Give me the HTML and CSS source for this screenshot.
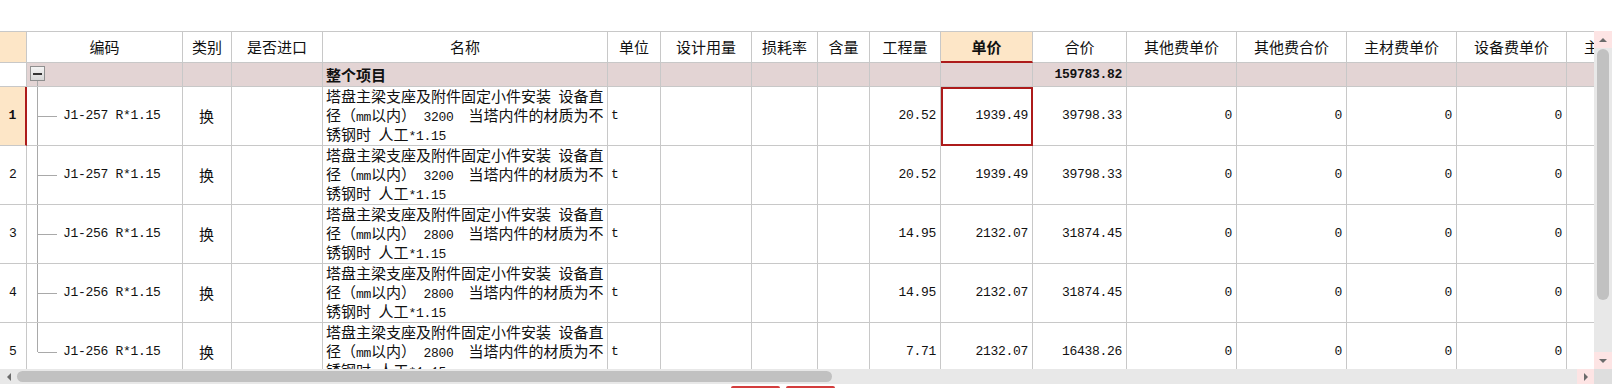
FILE: index.html
```html
<!DOCTYPE html>
<html lang="zh-CN">
<head>
  <meta charset="UTF-8">
  <title>分部分项</title>
  <link rel="stylesheet" href="styles.css">
</head>
<body>
  <div class="grid">
    <div class="grid-body">
      <div class="viewport">
        <table class="sheet">
          <colgroup>
            <col style="width:27px"><col style="width:156px"><col style="width:49px"><col style="width:91px">
            <col style="width:285px"><col style="width:53px"><col style="width:91px"><col style="width:66px">
            <col style="width:52px"><col style="width:71px"><col style="width:92px"><col style="width:94px">
            <col style="width:110px"><col style="width:110px"><col style="width:110px"><col style="width:110px">
            <col style="width:110px">
          </colgroup>
          <tr class="head">
            <th class="rn corner"></th>
            <th>编码</th>
            <th>类别</th>
            <th>是否进口</th>
            <th>名称</th>
            <th>单位</th>
            <th>设计用量</th>
            <th>损耗率</th>
            <th>含量</th>
            <th>工程量</th>
            <th class="sorted">单价</th>
            <th>合价</th>
            <th>其他费单价</th>
            <th>其他费合价</th>
            <th>主材费单价</th>
            <th>设备费单价</th>
            <th>主材费合价</th>
          </tr>
          <tr class="group">
            <td class="rn"></td>
            <td class="code root"><span class="toggle"></span></td>
            <td></td>
            <td></td>
            <td class="title">整个项目</td>
            <td></td>
            <td></td>
            <td></td>
            <td></td>
            <td></td>
            <td></td>
            <td class="num">159783.82</td>
            <td></td>
            <td></td>
            <td></td>
            <td></td>
            <td></td>
          </tr>
          <tr class="item">
            <td class="rn current">1</td>
            <td class="code">J1-257 R*1.15</td>
            <td class="mid">换</td>
            <td></td>
            <td class="name">塔盘主梁支座及附件固定小件安装<span class="m"> </span>设备直<br>径（<span class="m">mm</span>以内）<span class="m"> 3200  </span>当塔内件的材质为不<br>锈钢时<span class="m"> </span>人工<span class="m">*1.15</span></td>
            <td class="unit">t</td>
            <td></td>
            <td></td>
            <td></td>
            <td class="num">20.52</td>
            <td class="num active">1939.49</td>
            <td class="num">39798.33</td>
            <td class="num">0</td>
            <td class="num">0</td>
            <td class="num">0</td>
            <td class="num">0</td>
            <td></td>
          </tr>
          <tr class="item">
            <td class="rn">2</td>
            <td class="code">J1-257 R*1.15</td>
            <td class="mid">换</td>
            <td></td>
            <td class="name">塔盘主梁支座及附件固定小件安装<span class="m"> </span>设备直<br>径（<span class="m">mm</span>以内）<span class="m"> 3200  </span>当塔内件的材质为不<br>锈钢时<span class="m"> </span>人工<span class="m">*1.15</span></td>
            <td class="unit">t</td>
            <td></td>
            <td></td>
            <td></td>
            <td class="num">20.52</td>
            <td class="num">1939.49</td>
            <td class="num">39798.33</td>
            <td class="num">0</td>
            <td class="num">0</td>
            <td class="num">0</td>
            <td class="num">0</td>
            <td></td>
          </tr>
          <tr class="item">
            <td class="rn">3</td>
            <td class="code">J1-256 R*1.15</td>
            <td class="mid">换</td>
            <td></td>
            <td class="name">塔盘主梁支座及附件固定小件安装<span class="m"> </span>设备直<br>径（<span class="m">mm</span>以内）<span class="m"> 2800  </span>当塔内件的材质为不<br>锈钢时<span class="m"> </span>人工<span class="m">*1.15</span></td>
            <td class="unit">t</td>
            <td></td>
            <td></td>
            <td></td>
            <td class="num">14.95</td>
            <td class="num">2132.07</td>
            <td class="num">31874.45</td>
            <td class="num">0</td>
            <td class="num">0</td>
            <td class="num">0</td>
            <td class="num">0</td>
            <td></td>
          </tr>
          <tr class="item">
            <td class="rn">4</td>
            <td class="code">J1-256 R*1.15</td>
            <td class="mid">换</td>
            <td></td>
            <td class="name">塔盘主梁支座及附件固定小件安装<span class="m"> </span>设备直<br>径（<span class="m">mm</span>以内）<span class="m"> 2800  </span>当塔内件的材质为不<br>锈钢时<span class="m"> </span>人工<span class="m">*1.15</span></td>
            <td class="unit">t</td>
            <td></td>
            <td></td>
            <td></td>
            <td class="num">14.95</td>
            <td class="num">2132.07</td>
            <td class="num">31874.45</td>
            <td class="num">0</td>
            <td class="num">0</td>
            <td class="num">0</td>
            <td class="num">0</td>
            <td></td>
          </tr>
          <tr class="item">
            <td class="rn">5</td>
            <td class="code last">J1-256 R*1.15</td>
            <td class="mid">换</td>
            <td></td>
            <td class="name">塔盘主梁支座及附件固定小件安装<span class="m"> </span>设备直<br>径（<span class="m">mm</span>以内）<span class="m"> 2800  </span>当塔内件的材质为不<br>锈钢时<span class="m"> </span>人工<span class="m">*1.15</span></td>
            <td class="unit">t</td>
            <td></td>
            <td></td>
            <td></td>
            <td class="num">7.71</td>
            <td class="num">2132.07</td>
            <td class="num">16438.26</td>
            <td class="num">0</td>
            <td class="num">0</td>
            <td class="num">0</td>
            <td class="num">0</td>
            <td></td>
          </tr>
        </table>
      </div>
      <div class="vscroll">
        <div class="sb-btn hot"><span class="tri up"></span></div>
        <div class="vtrack"><div class="vthumb"></div></div>
        <div class="sb-btn hot"><span class="tri down"></span></div>
      </div>
    </div>
    <div class="hscroll">
      <div class="hbar">
        <div class="sb-btn"><span class="tri left"></span></div>
        <div class="hthumb"></div>
        <div class="htrack"></div>
        <div class="sb-btn hot"><span class="tri right"></span></div>
      </div>
      <div class="corner-box"></div>
    </div>
  </div>
  <div class="actions">
    <div class="act"></div>
    <div class="act"></div>
  </div>
</body>
</html>
```

FILE: styles.css
```css
body {
  margin: 0;
  background: #fff;
  color: #111;
  font-family: "Noto Sans CJK SC", sans-serif;
  font-size: 15px;
}
.grid {
  margin-top: 31px;
  width: 1612px;
}
.grid-body {
  display: flex;
  height: 338px;
}
.viewport {
  width: 1594px;
  overflow: hidden;
}
.sheet {
  width: 1677px;
  table-layout: fixed;
  border-collapse: separate;
  border-spacing: 0;
  border-top: 1px solid #c8c8c8;
}
.sheet th,
.sheet td {
  border-right: 1px solid #c8c8c8;
  border-bottom: 1px solid #c8c8c8;
  padding: 0 4px 0 3px;
  line-height: 16px;
  white-space: nowrap;
  overflow: hidden;
  font-weight: normal;
}
.head {
  height: 31px;
}
.head th {
  text-align: center;
  padding: 0;
}
.head th.sorted {
  background: #fde6c7;
  font-weight: bold;
  border-bottom: 2px solid #ad1b1b;
}
.corner {
  background: #fde6c7;
}
.group {
  height: 24px;
}
.group td {
  background: #e3d4d4;
}
.group td.rn {
  background: #fff;
}
.group .title {
  font-weight: bold;
}
.group .num {
  font-weight: bold;
}
.item {
  height: 59px;
}
.rn {
  text-align: center;
  padding: 0 !important;
  font-family: "Liberation Mono", monospace;
  font-size: 13px;
}
.rn.current {
  background: #fde6c7;
  font-weight: bold;
  border-right: 2px solid #ad1b1b;
}
.code {
  padding-left: 36px !important;
  font-family: "Liberation Mono", monospace;
  font-size: 13px;
  letter-spacing: -0.3px;
  background:
    linear-gradient(#a9a9a9, #a9a9a9) 10px 0 / 1px 100% no-repeat,
    linear-gradient(#a9a9a9, #a9a9a9) 11px 50% / 19px 1px no-repeat;
}
.code.last {
  background:
    linear-gradient(#a9a9a9, #a9a9a9) 10px 0 / 1px 50% no-repeat,
    linear-gradient(#a9a9a9, #a9a9a9) 11px 50% / 19px 1px no-repeat;
}
.code.root {
  padding-left: 3px !important;
  vertical-align: top;
  background:
    linear-gradient(#a9a9a9, #a9a9a9) 10px 18px / 1px 10px no-repeat,
    #e3d4d4;
}
.toggle {
  display: flex;
  align-items: center;
  justify-content: center;
  width: 13px;
  height: 13px;
  margin-top: 3px;
  border: 1px solid #8f8f8f;
  background: linear-gradient(#f4f4f4, #d6d6d6);
}
.toggle::after {
  content: "";
  width: 9px;
  height: 2px;
  background: #333;
}
.mid {
  text-align: center;
}
.name {
  padding-right: 0 !important;
}
.m {
  font-family: "Liberation Mono", monospace;
  font-size: 13px;
  letter-spacing: -0.3px;
  white-space: pre;
}
.num {
  text-align: right;
  font-family: "Liberation Mono", monospace;
  font-size: 13px;
  letter-spacing: -0.3px;
}
.num.active {
  outline: 2px solid #ad1b1b;
  outline-offset: -2px;
}
.unit {
  font-family: "Liberation Mono", monospace;
  font-size: 13px;
}

/* scrollbars */
.vscroll {
  width: 18px;
  display: flex;
  flex-direction: column;
  background: #e8e8e8;
}
.sb-btn {
  width: 17px;
  height: 17px;
  flex: none;
  display: flex;
  align-items: center;
  justify-content: center;
}
.vscroll .sb-btn {
  width: 18px;
}
.sb-btn.hot {
  background: #fde4e4;
}
.vtrack {
  flex: 1;
  padding-top: 1px;
}
.vthumb {
  width: 12px;
  height: 251px;
  margin-left: 3px;
  border-radius: 6px;
  background: #c1c1c1;
}
.tri {
  width: 0;
  height: 0;
  border: 4px solid transparent;
}
.tri.up {
  border-top: 0;
  border-bottom-color: #6b6b6b;
}
.tri.down {
  border-bottom: 0;
  border-top-color: #6b6b6b;
}
.tri.left {
  border-left: 0;
  border-right-color: #6b6b6b;
}
.tri.right {
  border-right: 0;
  border-left-color: #6b6b6b;
}
.hscroll {
  display: flex;
  height: 15px;
}
.hbar {
  width: 1594px;
  display: flex;
  align-items: center;
  background: #e8e8e8;
}
.hbar .sb-btn {
  height: 15px;
}
.hthumb {
  width: 815px;
  height: 11px;
  border-radius: 6px;
  background: #c1c1c1;
}
.htrack {
  flex: 1;
}
.corner-box {
  width: 18px;
  background: #dedede;
}
.actions {
  display: flex;
  gap: 6px;
  padding-left: 731px;
  margin-top: 2px;
}
.act {
  width: 49px;
  height: 10px;
  border-top: 2px solid #d43d3d;
  border-radius: 2px 2px 0 0;
  background: #fff3f3;
}
```
